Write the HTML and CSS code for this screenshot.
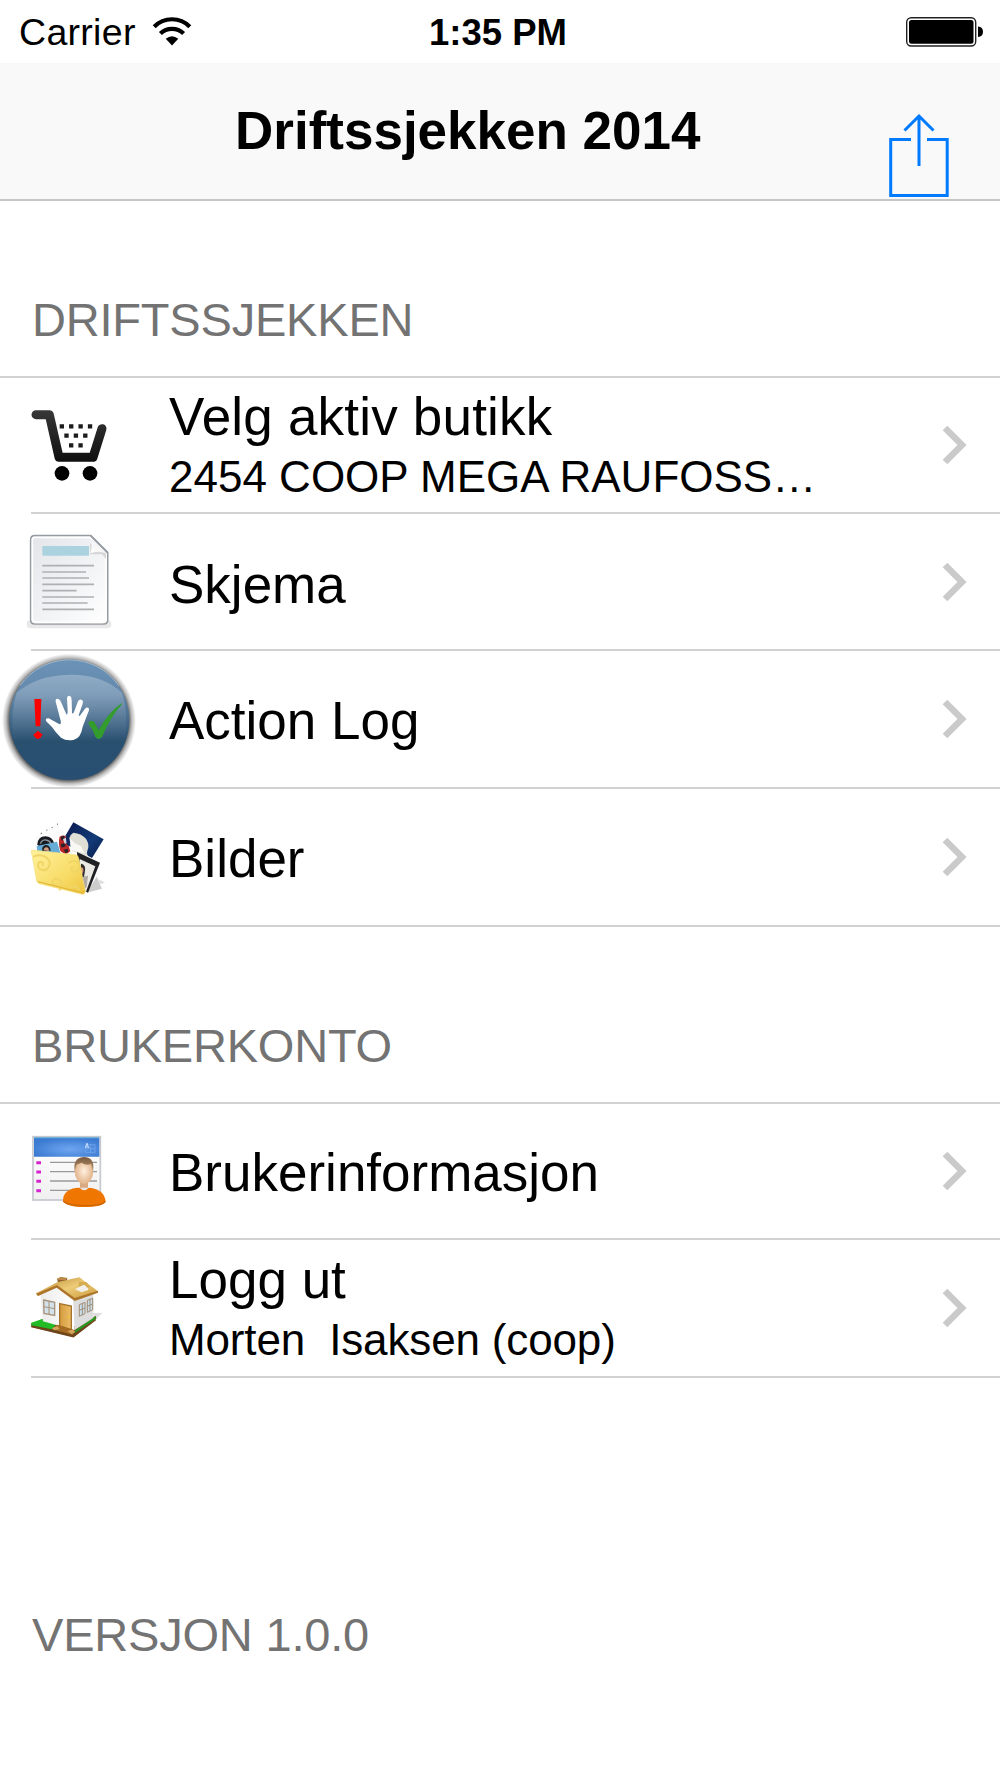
FILE: index.html
```html
<!DOCTYPE html>
<html lang="no">
<head>
<meta charset="utf-8">
<title>Driftssjekken 2014</title>
<link rel="stylesheet" href="styles.css">
</head>
<body>
<div class="status">
  <div class="carrier"><span class="carrier-name">Carrier</span>
    <svg class="wifi" width="40" height="30" viewBox="0 0 40 30"><g fill="none" stroke="#000" stroke-width="4.200"><path d="M2.200 9.700A25 25 0 0 1 37.800 9.700"/><path d="M8.400 16.600A16.500 16.500 0 0 1 31.600 16.600"/></g><path d="M13.700 21.800Q20 16.500 26.300 21.800L20 28.500Z"/></svg>
  </div>
  <div class="time">1:35 PM</div>
  <svg class="battery" width="80" height="32" viewBox="0 0 80 32"><rect x="1.700" y="1.700" width="69" height="28.300" rx="4.500" fill="none" stroke="#222" stroke-width="1.400"/><rect x="4" y="4" width="64.500" height="23.700" rx="2.500"/><path d="M73 10.500Q78 11 78 15.800T73 21.100Z"/></svg>
</div>
<header class="nav">
  <h1 class="nav-title">Driftssjekken 2014</h1>
  <svg class="share" width="60" height="85" viewBox="0 0 60 85" fill="none" stroke="#007aff" stroke-width="3"><path d="M22 26.500H1.700V82.500H58.200V26.500H38M30 3V53M15.500 17.500L30 3L44.500 17.500"/></svg>
</header>

<h2 class="section">DRIFTSSJEKKEN</h2>
<ul class="list">
  <li class="row row-a">
    <svg class="icon" viewBox="-60 -51 450 402">
      <defs><linearGradient id="cart" gradientUnits="userSpaceOnUse" x1="0" y1="45" x2="0" y2="260"><stop stop-color="#383838"/><stop offset="1"/></linearGradient></defs>
      <path d="M48 59H88L117 187H219L246 101" fill="none" stroke="url(#cart)" stroke-width="27" stroke-linecap="round" stroke-linejoin="round"/>
      <circle cx="126" cy="235" r="22"/><circle cx="210" cy="235" r="22"/>
      <g stroke="#1c1c1c" stroke-width="13" stroke-dasharray="13 15.200"><path d="M119 94H218M133 122H204M147 151H189"/></g>
    </svg>
    <div class="text text-double"><div class="label label-store">Velg aktiv butikk</div><div class="detail">2454 COOP MEGA RAUFOSS…</div></div>
    <svg class="chevron" viewBox="0 0 26 40"><path d="M3 3L20 20L3 37"/></svg>
  </li>
  <li class="row row-b">
    <svg class="icon" viewBox="0 -18 450 405">
      <defs>
        <linearGradient id="sheet" x1="0" y1="0" x2="1" y2="1"><stop stop-color="#e3e5e9"/><stop offset=".55" stop-color="#f2f3f5"/><stop offset="1" stop-color="#fff"/></linearGradient>
        <linearGradient id="curl" x1="0" y1="1" x2="1" y2="0"><stop stop-color="#fff"/><stop offset=".6" stop-color="#f1f1f1"/><stop offset="1" stop-color="#ccc"/></linearGradient>
      </defs>
      <rect x="80" y="300" width="254" height="25" rx="12" fill="#e8e8e8"/>
      <path d="M104 47H272L323 98V300Q323 312 311 312H104Q92 312 92 300V59Q92 47 104 47Z" fill="url(#sheet)" stroke="#969ba1" stroke-width="5"/>
      <path d="M104 52H270L318 100V298Q318 307 308 307H106Q97 307 97 298V60Q97 52 104 52Z" fill="none" stroke="#fff" stroke-width="5"/>
      <path d="M127 78H267V107H127Z" fill="#abd3df"/>
      <path d="M270 103H306L318 116V98L270 70Z" fill="#d7d7d9"/>
      <path d="M270 49Q280 65 271 100Q292 91 320 100Z" fill="url(#curl)"/>
      <path d="M272 47L323 98" stroke="#969ba1" stroke-width="5"/>
      <path d="M127 137H282M127 156H258M127 174H267M127 193H282M127 212H230M127 231H282M127 249H263M127 268H282" stroke="#aeb0b2" stroke-width="5"/>
    </svg>
    <div class="text text-low"><div class="label">Skjema</div></div>
    <svg class="chevron" viewBox="0 0 26 40"><path d="M3 3L20 20L3 37"/></svg>
  </li>
  <li class="row row-c">
    <svg class="icon" viewBox="0 3 450 408">
      <defs>
        <linearGradient id="ball" x1="0" y1="0" x2="0" y2="1"><stop stop-color="#6b93b8"/><stop offset=".3" stop-color="#6387a9"/><stop offset=".68" stop-color="#2a5070"/><stop offset="1" stop-color="#284f72"/></linearGradient>
        <linearGradient id="gloss" x1="0" y1="0" x2="0" y2="1"><stop stop-color="#fff" stop-opacity=".26"/><stop offset="1" stop-color="#fff" stop-opacity="0"/></linearGradient>
        <radialGradient id="halo"><stop offset=".87" stop-color="#000" stop-opacity=".75"/><stop offset=".94" stop-color="#000" stop-opacity=".25"/><stop offset="1" stop-color="#000" stop-opacity="0"/></radialGradient>
      </defs>
      <circle cx="207" cy="212" r="201" fill="url(#halo)"/>
      <circle cx="208" cy="210" r="180" fill="url(#ball)"/>
      <path d="M50 128Q110 76 208 74T366 128Q386 190 375 270H41Q30 190 50 128Z" fill="url(#gloss)"/>
      <path d="M60 107A180 180 0 0 1 356 107" fill="none" stroke="#9db9d0" stroke-width="3"/>
      <path d="M103 147H124L121 229H107Z" fill="#f00"/><path d="M114 242L128 254Q121 266 114 267Q106 266 100 254Z" fill="#f00"/>
      <path d="M138 207Q144 202 154 209L179 223Q184 222 182 212L167 155Q166 144 175 147Q181 149 184 158L199 193Q203 195 203 184L201 144Q203 136 210 138Q215 140 215 150L216 188Q218 194 222 186L234 154Q239 146 246 150Q251 154 247 164L236 196Q238 201 243 193L255 176Q262 169 267 176Q268 181 264 188L248 230Q242 265 222 269Q200 274 183 263Q167 248 156 231L140 215Q136 211 138 207Z" fill="#fff"/>
      <path d="M266 216Q278 207 285 219L296 241Q322 191 364 160L366 163Q333 198 306 261Q295 273 286 260Q278 237 266 223Z" fill="#329c2d"/>
    </svg>
    <div class="text"><div class="label">Action Log</div></div>
    <svg class="chevron" viewBox="0 0 26 40"><path d="M3 3L20 20L3 37"/></svg>
  </li>
  <li class="row row-c row-full">
    <svg class="icon" viewBox="-60 -63 450 408">
      <defs>
        <linearGradient id="folder" x1="0" y1="0" x2="1" y2="1"><stop stop-color="#fff19c"/><stop offset=".6" stop-color="#f8dc68"/><stop offset="1" stop-color="#edc43e"/></linearGradient>
        <linearGradient id="night" x1="0" y1="0" x2="1" y2="1"><stop stop-color="#0c1a50"/><stop offset=".6" stop-color="#123a78"/><stop offset="1" stop-color="#081a48"/></linearGradient>
      </defs>
      <path d="M200 248L246 236L230 200Z" fill="#ccc"/>
      <path d="M240 222L255 218L235 208Z" fill="#ddd"/>
      <path d="M48 80L112 42L140 78V130H50Z" fill="#fbfbfb"/>
      <path d="M62 71L66 69M79 61L82 60M95 53L98 52M111 43L114 42" stroke="#555" stroke-width="3"/>
      <path d="M52 103Q54 79 76 79Q96 80 102 98L96 108H56Z" fill="#171a20"/>
      <path d="M61 101Q67 88 78 90Q89 91 93 101" fill="none" stroke="#8c949b" stroke-width="4"/>
      <path d="M50 108L111 95L122 131L52 126Z" fill="#65add6"/>
      <path d="M67 123Q64 108 77 105Q91 105 92 122Z" fill="#231e22"/><path d="M71 121Q72 112 79 112Q87 113 87 123Z" fill="#d8a083"/>
      <path d="M119 80Q131 73 138 80L151 124L137 134L121 123Q114 99 119 80Z" fill="#bd2727"/>
      <path d="M122 81L132 77L135 88L125 92ZM122 103L134 99L137 109L125 113ZM132 119L143 116L145 125L136 130Z" fill="#28222a"/>
      <path d="M129 87L137 83L143 98L134 101Z" fill="#dbd4e1"/>
      <path d="M160 37L251 88L216 144L140 104L137 76Z" fill="url(#night)"/>
      <path d="M160 68Q184 70 198 86Q210 105 202 122Q198 137 210 141L155 123L148 84Q151 73 160 68Z" fill="#e0dfd5"/>
      <path d="M150 84Q160 100 183 108L194 130L152 120Z" fill="#f8f8f4"/>
      <path d="M171 126L240 158L204 248L176 231Z" fill="#202124"/>
      <path d="M179 147L226 169L198 245L174 230Z" fill="#ebe9e4"/>
      <path d="M183 161Q198 164 195 182L191 207L180 208Z" fill="#302b2b"/><path d="M182 172Q192 171 190 184L184 200Z" fill="#d69a75"/>
      <path d="M185 202L204 197L200 231L190 239Z" fill="#b2aaa4"/>
      <path d="M35 120L166 134Q174 135 176 145L196 244Q195 254 187 253L58 221Q52 219 50 213L34 124Z" fill="url(#folder)" stroke="#f5df82" stroke-width="2"/>
      <g fill="none" stroke="#f0d566" stroke-width="6" stroke-linecap="round"><path d="M42 139C72 127 99 151 86 171C76 188 49 179 55 161C59 151 73 157 68 165M148 158C169 142 188 168 173 182C163 191 147 180 157 172M119 239C133 225 119 199 103 207C91 214 99 230 109 223M151 232Q171 224 177 239"/></g>
      <path d="M54 215L189 249L194 240" fill="none" stroke="#dfb431" stroke-width="3"/>
    </svg>
    <div class="text"><div class="label">Bilder</div></div>
    <svg class="chevron" viewBox="0 0 26 40"><path d="M3 3L20 20L3 37"/></svg>
  </li>
</ul>

<h2 class="section">BRUKERKONTO</h2>
<ul class="list">
  <li class="row row-a">
    <svg class="icon" viewBox="-60 -48 450 402">
      <defs>
        <radialGradient id="banner" cx=".55" cy=".6" r=".6"><stop stop-color="#6fa5f0"/><stop offset="1" stop-color="#3b7bd2"/></radialGradient>
        <linearGradient id="page" x1="0" y1="0" x2="0" y2="1"><stop stop-color="#fff"/><stop offset="1" stop-color="#f0f0f0"/></linearGradient>
        <radialGradient id="face"><stop stop-color="#fff0df"/><stop offset="1" stop-color="#e1b38a"/></radialGradient>
        <linearGradient id="hair" x1="0" y1="0" x2="0" y2="1"><stop stop-color="#79583c"/><stop offset="1" stop-color="#b89573"/></linearGradient>
      </defs>
      <rect x="39" y="50" width="202" height="190" fill="url(#page)" stroke="#c5c8ce" stroke-width="5"/>
      <path d="M42 54H238V110H42Z" fill="url(#banner)"/><path d="M42 53H238" stroke="#73b3d9" stroke-width="4"/>
      <path d="M197 74H225V98H197ZM197 86H225M211 74V98" fill="none" stroke="#75a9ec" stroke-width="2"/><path d="M201 69V84M196 84L201 70L206 84" fill="none" stroke="#bed8fa" stroke-width="3"/>
      <path d="M49 128H63M49 156H63M49 184H63M49 212H63" stroke="#d622cf" stroke-width="9"/>
      <path d="M90 127H231M90 155H231M90 183H231M90 211H231" stroke="#999" stroke-width="4"/>
      <path d="M180 180H204V216H180Z" fill="#d9aa82"/>
      <path d="M129 243Q129 205 178 203Q192 215 207 203Q254 208 257 245Q248 261 193 261Q140 261 129 243Z" fill="#ef7600"/>
      <path d="M130 243Q140 256 193 257T256 244" fill="none" stroke="#cd6600" stroke-width="4"/>
      <path d="M180 203Q192 219 206 203" fill="#e7e3df"/>
      <ellipse cx="192" cy="153" rx="28" ry="39" fill="url(#face)"/>
      <path d="M164 153Q157 115 191 111Q226 112 219 153L213 131Q199 138 185 128Q172 132 170 134Z" fill="url(#hair)"/>
    </svg>
    <div class="text"><div class="label">Brukerinformasjon</div></div>
    <svg class="chevron" viewBox="0 0 26 40"><path d="M3 3L20 20L3 37"/></svg>
  </li>
  <li class="row row-c">
    <svg class="icon" viewBox="-60 -60 450 408">
      <defs>
        <linearGradient id="roof" x1="0" y1="0" x2="1" y2="1"><stop stop-color="#b8842d"/><stop offset=".5" stop-color="#edcc79"/><stop offset="1" stop-color="#c99535"/></linearGradient>
        <linearGradient id="wall" x1="0" y1="0" x2="1" y2="0"><stop stop-color="#ececec"/><stop offset="1" stop-color="#fff"/></linearGradient>
        <linearGradient id="door"><stop stop-color="#d49b3c"/><stop offset="1" stop-color="#edbd69"/></linearGradient>
      </defs>
      <path d="M218 159L248 158L226 179Z" fill="#dedede"/>
      <path d="M33 191L71 176L166 198L227 168L229 176L161 231L34 201Z" fill="#674419"/>
      <path d="M34 188L69 176L111 190L96 208L34 196Z" fill="#22bb25"/><path d="M166 211L227 168V177L164 219Z" fill="#279b20"/>
      <path d="M61 103L110 81L161 111L164 211L69 184Z" fill="url(#wall)"/>
      <path d="M159 113L220 102V174L164 210Z" fill="#ddd"/>
      <path d="M112 58L122 52L141 55V69L115 74Z" fill="#815526"/><path d="M110 56L122 51L144 54L136 61L113 61Z" fill="#bb8847"/>
      <path d="M48 100L113 66L178 52L234 94L164 120L110 80L54 108Z" fill="url(#roof)"/>
      <path d="M48 101L111 75L164 114L234 92V98L164 123L110 83L54 108Z" fill="#ac752a"/>
      <path d="M165 88L193 72L203 73L205 90L185 97Z" fill="#f1efe7"/><path d="M177 65L199 66L211 81L203 84L193 74L175 81Z" fill="#d6ac51"/>
      <path d="M71 120L104 127V166L72 160Z" fill="#d2e1ea" stroke="#a8937b" stroke-width="4"/><path d="M87 123V163M71 140L104 146" stroke="#a8937b" stroke-width="3"/>
      <path d="M119 131L154 138V209L119 198Z" fill="url(#door)" stroke="#a5732d" stroke-width="4"/><circle cx="147" cy="171" r="3" fill="#e6cf28"/>
      <path d="M178 134L195 127V161L178 169ZM202 121L218 115V149L202 157ZM187 131V165M178 151L195 144M210 118V153M202 139L218 132" fill="#c9deea" stroke="#a08d76" stroke-width="3"/>
      <path d="M95 208L111 194L164 211L159 225Z" fill="#a56b22"/><path d="M96 204L112 199L119 207L103 211ZM142 213L158 209L166 216L155 222Z" fill="#d4a75f"/>
      <path d="M34 200L160 230L227 179" fill="none" stroke="#73471e" stroke-width="4"/>
    </svg>
    <div class="text text-double"><div class="label">Logg ut</div><div class="detail detail-user">Morten&nbsp; Isaksen (coop)</div></div>
    <svg class="chevron" viewBox="0 0 26 40"><path d="M3 3L20 20L3 37"/></svg>
  </li>
</ul>
<footer class="version">VERSJON 1.0.0</footer>
</body>
</html>
```
FILE: styles.css
```css
* { box-sizing: border-box; }
body {
  margin: 0;
  width: 1000px;
  height: 1778px;
  overflow: hidden;
  background: #fff;
  color: #000;
  font-family: "Liberation Sans", Arial, sans-serif;
}
svg { display: block; }
.status {
  display: grid;
  grid-template-columns: 1fr auto 1fr;
  height: 63px;
  padding: 0 16px 0 19px;
  font-size: 37.5px;
  line-height: 65px;
}
.carrier { display: flex; gap: 16px; letter-spacing: 0.3px; }
.wifi { margin-top: 17px; }
.time { margin-right: 7px; font-weight: bold; font-size: 36.5px; }
.battery { justify-self: end; margin: 16px -1px 0 0; }
.nav {
  display: flex;
  justify-content: space-between;
  height: 138px;
  padding: 0 51px 0 235px;
  background: #f9f9f9;
  border-bottom: 2px solid #c6c6c6;
}
.nav-title {
  margin: 0;
  font-size: 53px;
  line-height: 136px;
  white-space: nowrap;
}
.share { margin-top: 50px; }
.section, .version {
  margin: 0;
  padding-left: 32px;
  color: #737373;
  font-size: 47px;
  font-weight: normal;
  line-height: 60px;
  letter-spacing: -0.2px;
}
.section { height: 175px; padding-top: 89px; }
.list {
  margin: 0;
  padding: 0;
  list-style: none;
  border-top: 2px solid #d2d2d2;
}
.row {
  display: flex;
  align-items: center;
  padding-bottom: 2px;
  background: linear-gradient(#d2d2d2, #d2d2d2) 31px 100% / 1000px 2px no-repeat;
}
.row-full { background-position: 0 100%; }
.row-a { height: 136px; }
.row-b { height: 137px; }
.row-c { height: 138px; }
.icon { flex: none; width: 150px; height: 100%; margin-right: 19px; }
.text { flex: 1; padding-top: 4px; white-space: pre; }
.text-low { padding-top: 6px; }
.text-double { padding-top: 0; padding-bottom: 3px; }
.label { font-size: 53px; line-height: 66px; }
.label-store { letter-spacing: 0.2px; }
.detail { font-size: 44px; line-height: 54px; }
.detail-user { letter-spacing: -0.15px; }
.chevron {
  width: 26px;
  height: 40px;
  margin-right: 32px;
  fill: none;
  stroke: #cacaca;
  stroke-width: 6.5;
}
.version { padding-top: 227px; }
```
